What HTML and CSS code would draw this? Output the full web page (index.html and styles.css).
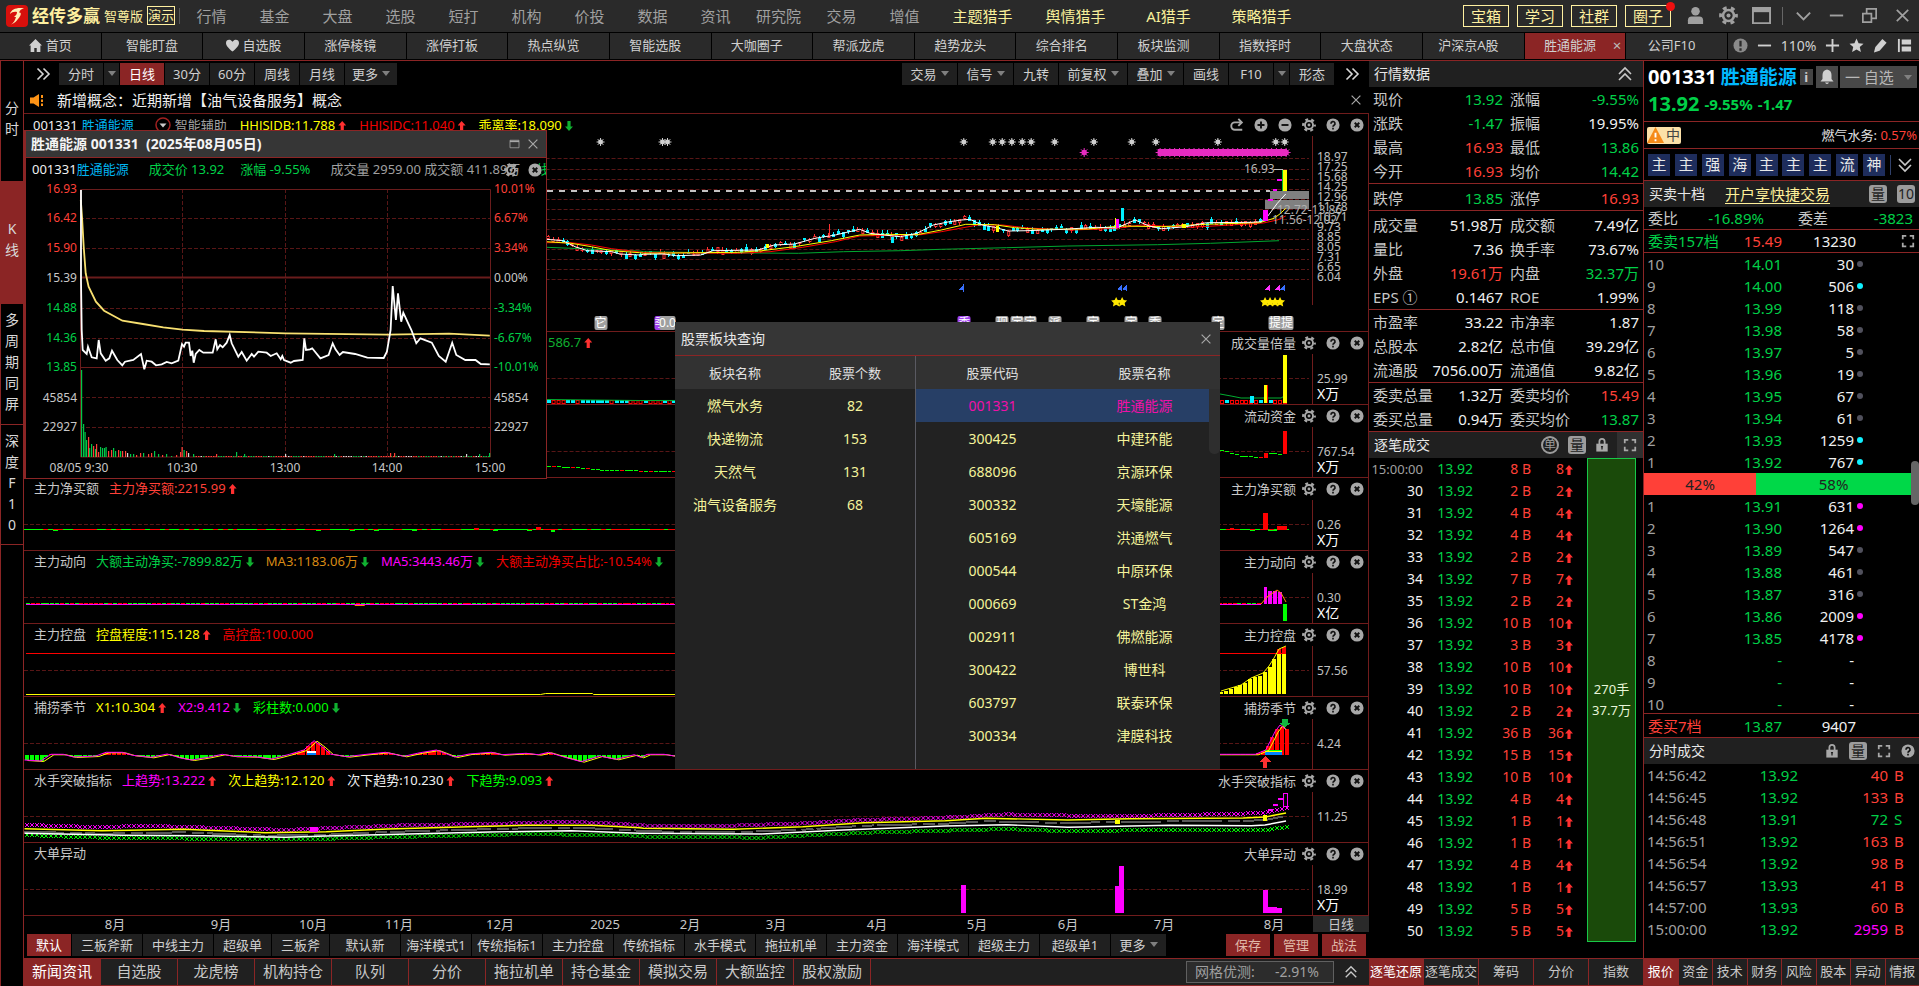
FILE: index.html
```html
<!DOCTYPE html>
<html lang="zh-CN">
<head>
<meta charset="utf-8">
<title>经传多赢 - 胜通能源 001331</title>
<link rel="stylesheet" href="styles.css">
</head>
<body>
<svg class="defs" aria-hidden="true">
  <symbol id="i-gear" viewBox="0 0 16 16"><circle cx="8" cy="8" r="4.6" fill="none" stroke="currentColor" stroke-width="2.2"/><circle cx="8" cy="8" r="1.7" fill="currentColor"/><circle cx="8" cy="8" r="6.6" fill="none" stroke="currentColor" stroke-width="2.6" stroke-dasharray="3.3 3.61" stroke-dashoffset="1.6"/></symbol>
  <symbol id="i-help" viewBox="0 0 16 16"><circle cx="8" cy="8" r="7.5" fill="currentColor"/><path d="M5.7 6.5a2.3 2.3 0 1 1 3.5 1.8c-.8.5-1.2.8-1.2 1.6M8 11v2" fill="none" stroke="#111" stroke-width="1.9"/></symbol>
  <symbol id="i-off" viewBox="0 0 16 16"><circle cx="8" cy="8" r="7.5" fill="currentColor"/><path d="M5.4 5.4l5.2 5.2M10.6 5.4l-5.2 5.2" stroke="#111" stroke-width="2.2"/></symbol>
  <symbol id="i-add" viewBox="0 0 16 16"><circle cx="8" cy="8" r="7.5" fill="currentColor"/><path d="M8 4v8M4 8h8" stroke="#111" stroke-width="2.2"/></symbol>
  <symbol id="i-sub" viewBox="0 0 16 16"><circle cx="8" cy="8" r="7.5" fill="currentColor"/><path d="M4 8h8" stroke="#111" stroke-width="2.2"/></symbol>
  <symbol id="i-redo" viewBox="0 0 16 16"><path d="M14 13.5H5.5a4 4.2 0 0 1 0-8.5H13M9.5 1L13.500 5 9.500 9" fill="none" stroke="currentColor" stroke-width="2.2"/></symbol>
  <symbol id="i-x" viewBox="0 0 16 16"><path d="M3 3l10 10M13 3L3 13" stroke="currentColor" stroke-width="1.4"/></symbol>
  <symbol id="i-right" viewBox="0 0 16 16"><path d="M2.5 2.5L8 8l-5.5 5.5M8.5 2.5L14 8l-5.500 5.500" fill="none" stroke="currentColor" stroke-width="1.6"/></symbol>
  <symbol id="i-up" viewBox="0 0 16 16"><path d="M2 8l6-6 6 6M2 14l6-6 6 6" fill="none" stroke="currentColor" stroke-width="1.6"/></symbol>
  <symbol id="i-down" viewBox="0 0 16 16"><path d="M2 2l6 6 6-6M2 8l6 6 6-6" fill="none" stroke="currentColor" stroke-width="1.6"/></symbol>
  <symbol id="i-lock" viewBox="0 0 16 16"><path d="M5 7V4a3 3 0 0 1 6 0v3" fill="none" stroke="currentColor" stroke-width="2"/><path d="M1.5 6.500h13v9h-13z" fill="currentColor"/><path d="M8 9v4M6.800 10h2.400" stroke="#111" stroke-width="1.3"/></symbol>
  <symbol id="i-full" viewBox="0 0 16 16"><path d="M2 6V2h4M10 2h4v4M14 10v4h-4M6 14H2v-4" fill="none" stroke="currentColor" stroke-width="2"/></symbol>
  <symbol id="i-win" viewBox="0 0 16 16"><path d="M2 3h12v10H2z" fill="none" stroke="currentColor"/><path d="M2 4.500h12" stroke="currentColor" stroke-width="2"/></symbol>
</svg>

<header class="topbar">
  <div class="brand">
    <svg class="logo" viewBox="0 0 22 22"><rect width="22" height="22" rx="4" fill="#d8100c"/><path d="M4 9C5 4 12 2 18 3.500c-3 .5-4 1.500-5 4C16 7 15 11 12 14c-1.500 2-3 4-7 5.500 3-2 4-4.500 5-7.500H8c2-1.500 3-3 3-5C8 6.500 6 7 4 9z" fill="#fff0b8"/></svg>
    <strong>经传多赢</strong><span>智尊版</span><em>演示</em>
  </div>
  <nav class="topnav" id="topnav"></nav>
  <div class="topbtns"><button>宝箱</button><button>学习</button><button>社群</button><button class="dot">圈子</button></div>
  <div class="wins">
    <button aria-label="用户"><svg viewBox="0 0 20 20"><circle cx="10" cy="5.500" r="4.500" fill="currentColor"/><path d="M2 19v-4q0-4 4-4h8q4 0 4 4v4z" fill="currentColor"/></svg></button>
    <button aria-label="设置"><svg><use href="#i-gear"/></svg></button>
    <button aria-label="窗口"><svg viewBox="0 0 20 20"><path d="M1 2h18v16H1z" fill="none" stroke="currentColor" stroke-width="2"/><path d="M1 4h18" stroke="currentColor" stroke-width="5"/></svg></button>
    <i class="sep"></i>
    <button aria-label="菜单"><svg viewBox="0 0 20 20"><path d="M3 7l7 7 7-7" fill="none" stroke="currentColor" stroke-width="2"/></svg></button>
    <button aria-label="最小化"><svg viewBox="0 0 20 20"><path d="M3 10h14" stroke="currentColor" stroke-width="2"/></svg></button>
    <button aria-label="还原"><svg viewBox="0 0 20 20"><path d="M3 8h9v9H3zM7 8V3h10v10h-5" fill="none" stroke="currentColor" stroke-width="1.8"/></svg></button>
    <button aria-label="关闭"><svg viewBox="0 0 20 20"><path d="M4 4l12 12M16 4L4 16" stroke="currentColor" stroke-width="1.8"/></svg></button>
  </div>
</header>

<div class="tabbar">
  <nav class="tabs" id="tabs"></nav>
  <div class="tabtools">
    <svg viewBox="0 0 16 16"><circle cx="8" cy="8" r="7.500" fill="#8a8a8a"/><path d="M8 3v6M8 11v2.500" stroke="#2a2a2a" stroke-width="2.400"/></svg>
    <svg viewBox="0 0 16 16"><path d="M1 8h14" stroke="currentColor" stroke-width="2"/></svg>
    <span>110%</span>
    <svg viewBox="0 0 16 16"><path d="M1 8h14M8 1v14" stroke="currentColor" stroke-width="2"/></svg>
    <svg viewBox="0 0 16 16"><path d="M8 .5l2.200 5 5.300.5-4 3.600 1.200 5.400L8 12.200 3.300 15l1.200-5.400L.5 6l5.300-.5z" fill="currentColor"/></svg>
    <svg viewBox="0 0 16 16"><path d="M10 1l4.500 4L7 13.500 1 15.500l1.500-6z" fill="currentColor"/></svg>
    <svg viewBox="0 0 16 16"><path d="M2 1v14" stroke="currentColor" stroke-width="2"/><path d="M5 1.500h10V7H5zM5 9h10v5.500H5z" fill="currentColor"/></svg>
  </div>
</div>

<main class="layout">
  <aside class="side">
    <button class="s-min"><span>分</span><span>时</span></button>
    <button class="s-k"><span>K</span><span>线</span></button>
    <button class="s-multi"><span>多</span><span>周</span><span>期</span><span>同</span><span>屏</span></button>
    <button class="s-f10"><span>深</span><span>度</span><span>F</span><span>1</span><span>0</span></button>
  </aside>

  <section class="charts">
    <div class="tools">
      <svg class="more"><use href="#i-right"/></svg>
      <div class="tgroup"><button class="w44">分时</button><button class="caret w14" aria-label="分时菜单"></button><button class="w44 on">日线</button><button class="w44">30分</button><button class="w44">60分</button><button class="w44">周线</button><button class="w44">月线</button><button class="caret w52">更多</button></div>
      <div class="tgroup end"><button class="caret w55">交易</button><button class="caret w55">信号</button><button class="w44">九转</button><button class="caret w68">前复权</button><button class="caret w55">叠加</button><button class="w44">画线</button><button class="w44">F10</button><button class="caret w14" aria-label="F10菜单"></button><button class="w44">形态</button></div>
      <svg class="more last"><use href="#i-right"/></svg>
    </div>
    <div class="notice">
      <svg class="horn" viewBox="0 0 15 13"><path d="M0 3.500h3.500L9 0v13L3.500 9.500H0z" fill="#ff9416"/><path d="M12 1v3M12 5.500v2.500M12 9.500v2.500" stroke="#ff9416" stroke-width="2"/></svg>
      <span>新增概念：近期新增【油气设备服务】概念</span>
      <svg class="ico nx"><use href="#i-x"/></svg>
    </div>
    <div class="pane kpane">
      <svg class="plot" id="kplot" viewBox="24 114 1289 217" preserveAspectRatio="none"></svg>
      <div class="axis" id="kaxis"></div>
      <div class="legend"><span class="white">001331</span><span class="cyan tight">胜通能源</span><svg class="drop" viewBox="0 0 16 16"><circle cx="8" cy="8" r="7" fill="none" stroke="#a02020" stroke-width="1.5"/><path d="M4.500 6.500h7L8 10.500z" fill="#ccc"/></svg><span class="gray tight">智能辅助</span><span class="yellow">HHJSJDB:11.788<i class="ar"></i></span><span class="red">HHJSJDC:11.040<i class="ar"></i></span><span class="yellow">乖离率:18.090<i class="ar dn"></i></span></div>
      <div class="pico"><svg><use href="#i-redo"/></svg><svg><use href="#i-add"/></svg><svg><use href="#i-sub"/></svg><svg><use href="#i-gear"/></svg><svg><use href="#i-help"/></svg><svg><use href="#i-off"/></svg></div>
      <span class="hi">16.93</span><span class="rng r1">12.72-13.86</span><span class="rng r2">11.56-12.02</span>
      <div id="ktags"></div>
    </div>
    <div class="panes" id="panes"></div>
    <div class="dates"><div id="dates"></div><button>日线</button></div>
    <div class="modes"><div class="mlist" id="modes"></div><div class="mact"><button>保存</button><button>管理</button><button>战法</button></div></div>
    <footer class="bottom">
      <nav class="btabs" id="btabs"></nav>
      <div class="grid-test"><span>网格优测:</span><span>-2.91%</span></div>
      <svg class="ico bup"><use href="#i-up"/></svg>
    </footer>

    <section class="mini">
      <header><h2>胜通能源 001331&nbsp; (2025年08月05日)</h2><button aria-label="最大化"><svg class="ico s"><use href="#i-win"/></svg></button><button aria-label="关闭"><svg class="ico"><use href="#i-x"/></svg></button></header>
      <div class="minfo"><span class="white">001331<b class="cyan">胜通能源</b></span><span class="green">成交价 13.92</span><span class="green">涨幅 -9.55%</span><span class="gray">成交量 2959.00 成交额 411.89万</span><span class="green">线</span></div>
      <div class="micons"><svg><use href="#i-gear"/></svg><svg><use href="#i-off"/></svg></div>
      <div class="mplot"><svg id="mplot" viewBox="26 180 520 298" preserveAspectRatio="none"></svg><div id="mlabels"></div></div>
    </section>

    <section class="dialog">
      <header><h2>股票板块查询</h2><button aria-label="关闭"><svg class="ico"><use href="#i-x"/></svg></button></header>
      <div class="dbody">
        <table class="tb-left"><thead><tr><th>板块名称</th><th>股票个数</th></tr></thead><tbody><tr><td>燃气水务</td><td>82</td></tr><tr><td>快递物流</td><td>153</td></tr><tr><td>天然气</td><td>131</td></tr><tr><td>油气设备服务</td><td>68</td></tr></tbody></table>
        <div class="dright"><table><thead><tr><th>股票代码</th><th>股票名称</th></tr></thead><tbody id="stocks"></tbody></table><i class="thumb"></i></div>
      </div>
    </section>
  </section>

  <section class="quote">
    <h2 class="bar">行情数据<svg class="ico big push"><use href="#i-up"/></svg></h2>
    <div id="quote"></div>
    <h2 class="bar">逐笔成交<span class="bicons"><b class="chip round">单</b><b class="chip">量</b><svg class="ico"><use href="#i-lock"/></svg><span class="fullbox"><svg class="ico"><use href="#i-full"/></svg></span></span></h2>
    <div class="ticks"><table id="ticks"></table><div class="gbox"><span>270手</span><span>37.7万</span></div></div>
    <footer class="bottom"><nav class="rtabs" id="rtabs1"></nav></footer>
  </section>

  <section class="level">
    <div class="stock"><strong>001331</strong><strong class="sname">胜通能源</strong><i class="info">i</i><button class="bell" aria-label="提醒"><svg viewBox="0 0 16 16"><path d="M8 .5c3 .5 4.500 2.500 4.500 5.500v4l2 2.500h-13l2-2.500V6C3.500 3 5 1 8 .5zM6 13.500h4Q8 16.500 6 13.500z" fill="#d0d0d0"/></svg></button><button class="caret fav">一 自选</button></div>
    <div class="price"><strong>13.92</strong><b>-9.55%</b><b>-1.47</b></div>
    <div class="sector"><span class="warn"><svg viewBox="0 0 18 18"><path d="M9 0l9 17H0z" fill="#f58a18"/><path d="M9 6v5M9 13v2" stroke="#fff" stroke-width="2"/></svg>中</span><span class="sec">燃气水务: <b>0.57%</b></span></div>
    <div class="tagsrow"><a href="#">主</a><a href="#">主</a><a href="#">强</a><a href="#">海</a><a href="#">主</a><a href="#">主</a><a href="#">主</a><a href="#">流</a><a href="#">神</a><i></i><svg class="ico big"><use href="#i-down"/></svg></div>
    <h2 class="bar">买卖十档<a class="open" href="#">开户享快捷交易</a><span class="bicons"><b class="chip">量</b><b class="chip">10</b></span></h2>
    <div class="ratio"><span>委比</span><span class="green num">-16.89%</span><span>委差</span><span class="green num">-3823</span></div>
    <div class="sum"><span class="green">委卖157档</span><span class="lred num">15.49</span><span class="num">13230</span><svg class="ico"><use href="#i-full"/></svg></div>
    <div class="book"><table id="asks"></table><div class="pct"><span class="p1">42%</span><span class="p2">58%</span></div><table id="bids"></table><i class="scroll"></i></div>
    <div class="sum top"><span class="lred">委买7档</span><span class="green num">13.87</span><span class="num">9407</span></div>
    <h2 class="bar">分时成交<span class="bicons"><svg class="ico"><use href="#i-lock"/></svg><b class="chip">量</b><svg class="ico"><use href="#i-full"/></svg><svg class="ico"><use href="#i-help"/></svg></span></h2>
    <table class="deals" id="deals"></table>
    <footer class="bottom"><nav class="rtabs" id="rtabs2"></nav></footer>
  </section>
</main>
<script src="app.js"></script>
</body>
</html>
```
FILE: styles.css
```css
* { box-sizing: border-box; }
html, body { height: 100%; }
body { margin: 0; background: #000; color: #c8c8c8; font: 13px/20px "Noto Sans", "Noto Sans CJK SC", sans-serif; display: flex; flex-direction: column; overflow: hidden; white-space: nowrap; }
button { font: inherit; color: inherit; background: none; border: 0; padding: 0; margin: 0; white-space: nowrap; }
a { color: inherit; text-decoration: none; }
h2 { margin: 0; font: inherit; }
i, em { font-style: normal; }
table { border-collapse: collapse; border-spacing: 0; }
td, th { padding: 0; font-weight: 400; }
svg { display: block; flex: none; }
.defs { position: absolute; width: 0; height: 0; }
.ico { width: 14px; height: 14px; color: #a8a8a8; }
.ico.big { width: 18px; height: 16px; color: #c8c8c8; }
.ico.s { width: 15px; height: 12px; }
.white { color: #f0f0f0; }
.gray { color: #a0a0a0; }
.cyan { color: #00b4f0; }
.yellow { color: #ffff00; }
.red { color: #f00000; }
.lred { color: #ff4038; }
.green { color: #00d048; }
.dgreen { color: #10b030; }
.lime { color: #00ff00; }
.mag { color: #ff00ff; }
.orange { color: #d88a14; }

.topbar { height: 32px; flex: none; background: #2a2a2a; display: flex; align-items: center; padding-bottom: 1px; }
.brand { width: 180px; flex: none; display: flex; align-items: center; color: #fff0a0; border-right: 1px solid #555; height: 16px; padding-left: 6px; }
.logo { width: 22px; height: 22px; margin-right: 4px; }
.brand strong { font-size: 17px; }
.brand span { margin-left: 4px; }
.brand em { border: 1px solid #fff0a0; margin-left: 4px; line-height: 17px; }
.topnav { display: flex; flex: 1; font-size: 15px; color: #a0a0a0; }
.topnav a { width: 63px; text-align: center; }
.topnav a.hunt { width: 93px; color: #f8f09a; }
.topbtns { display: flex; gap: 8px; font-size: 15px; color: #fff0a0; }
.topbtns button { border: 1px solid #fff0a0; width: 46px; height: 22px; line-height: 18px; position: relative; }
.dot::after { content: ""; position: absolute; right: -5px; top: -4px; width: 9px; height: 9px; border-radius: 50%; background: #f01010; }
.wins { display: flex; align-items: center; gap: 14px; padding: 0 7px 0 15px; color: #a0a0a0; }
.wins svg { width: 19px; height: 19px; }
.sep { width: 1px; height: 18px; background: #666; margin: 0 -3px; }
.tabbar { height: 29px; flex: none; padding: 1px 0; display: flex; border-bottom: 1px solid #8b2525; }
.tabs { flex: 1; display: grid; grid-auto-flow: column; grid-auto-columns: minmax(0, 1fr); gap: 1px; }
.tabs a { background: #2a2a2a; display: flex; align-items: center; justify-content: center; gap: 4px; position: relative; color: #d0d0d0; padding-bottom: 2px; }
.tabs a:nth-child(n+4) { padding-right: 10px; }
.tabs a.on { background: #8b2525; }
.tabs a.on::after { content: "×"; position: absolute; right: 4px; color: #bbb; font-size: 15px; }
.tabs svg { width: 13px; height: 13px; }
.tabtools { width: 191px; margin-left: 1px; background: #2a2a2a; display: flex; align-items: center; justify-content: space-between; padding: 0 7px 1px 5px; color: #d0d0d0; font-size: 14px; }
.tabtools svg { width: 15px; height: 15px; }

.layout { flex: 1; min-height: 0; display: grid; grid-template-columns: 24px minmax(0, 1fr) 275px 275px; }
.side { border: 1px solid #8b2525; border-width: 0 1px; display: flex; flex-direction: column; font-size: 14px; line-height: 21px; }
.side button { display: flex; flex-direction: column; align-items: center; border-bottom: 1px solid #8b2525; color: #d8d8d8; }
.side span { display: block; }
.s-min { padding: 36px 0 42px; }
.side .s-k { background: #8b2525; padding: 36px 0 43px; }
.s-multi { padding: 5px 0 10px; }
.s-f10 { padding: 5px 0 9px; }

.charts { display: flex; flex-direction: column; position: relative; min-width: 0; }
.tools { height: 26px; flex: none; display: flex; align-items: center; padding-left: 11px; }
.more { width: 16px; height: 18px; margin-right: 8px; color: #d8d8d8; }
.more.last { margin: 0 9px 0 10px; }
.tgroup { display: flex; gap: 1px; }
.tgroup.end { margin-left: auto; }
.tgroup button, .mlist button { background: #202020; height: 22px; color: #d0d0d0; }
.tgroup .on, .mlist .on, .mact button { background: #8b2525; color: #fff; }
.w44 { width: 44px; } .w14 { width: 15px; } .w52 { width: 52px; } .w55 { width: 55px; } .w68 { width: 68px; }
.caret::after { content: ""; display: inline-block; border: 4px solid transparent; border-top: 5px solid #808080; border-bottom: 0; margin-left: 4px; vertical-align: 3px; }
.caret.w14::after { margin-left: 0; }
.notice { height: 27px; flex: none; display: flex; align-items: center; border-bottom: 1px solid #701c1c; padding: 0 6px 0 6px; font-size: 15px; color: #f0f0f0; }
.horn { width: 15px; height: 13px; margin-right: 12px; }
.nx { margin-left: auto; }
.pane { position: relative; display: grid; grid-template-columns: minmax(0, 1fr) 56px; border-bottom: 1px solid #701c1c; border-right: 1px solid #701c1c; min-height: 0; overflow: hidden; flex: 73 73 0; }
.kpane { flex: 217 217 0; }
.panes { display: flex; flex-direction: column; flex: 584 584 0; min-height: 0; }
.plot { height: 100%; min-height: 0; position: absolute; inset: 0 56px 0 0; width: calc(100% - 56px); shape-rendering: crispEdges; }
.axis { grid-column: 2; border-left: 1px solid #701c1c; margin-top: 22px; padding: 17px 0 0 4px; font-size: 12px; line-height: 16px; color: #c0c0c0; display: flex; flex-direction: column; }
.axis b { font-weight: 400; font-size: 14px; line-height: 14px; color: #fff; }
#kaxis { padding-top: 13px; line-height: 16px; }
#kaxis span { height: 10px; }
.legend { position: absolute; left: 10px; top: 0; display: flex; align-items: center; gap: 12px; }
.kpane .legend { left: 9px; top: 1px; gap: 13px; }
.kpane .legend .tight { margin-left: -9px; }
.drop { width: 16px; height: 16px; margin-left: 8px; }
.legend .first { color: #c8c8c8; margin-right: -2px; }
.ar { display: inline-block; width: 8px; height: 10px; margin-left: 1px; vertical-align: -1px; background: #ff3030; clip-path: polygon(50% 0, 100% 45%, 70% 45%, 70% 100%, 30% 100%, 30% 45%, 0 45%); }
.legend .ar { margin-left: 3px; }
.ar.dn { background: #10b030; transform: rotate(180deg); }
.pico { position: absolute; right: 4px; top: 1px; display: flex; align-items: center; gap: 10px; color: #a8a8a8; }
.kpane .pico { top: 4px; }
.pico svg { width: 14px; height: 14px; }
.pname { color: #c8c8c8; margin-right: -4px; }
.hi { position: absolute; left: 1220px; top: 45px; color: #b8b8b8; }
.hi, .rng { line-height: 20px; font-size: 12px; }
.rng { position: absolute; color: #b0b0b0; }
.r1 { left: 1253px; top: 86px; }
.r2 { left: 1248px; top: 96px; }
.ktag { position: absolute; bottom: 1px; background: #a0a0a0; color: #fff; font-size: 12px; line-height: 14px; min-width: 13px; text-align: center; border-radius: 2px; transform: translateX(-50%); }
.ktag.p { background: #a040f0; }
.dates { height: 16px; flex: none; position: relative; display: flex; justify-content: flex-end; }
.dates span { position: absolute; transform: translateX(-50%); line-height: 17px; }
.dates button { width: 56px; background: #2a2a2a; line-height: 16px; }
.modes { height: 26px; flex: none; display: flex; align-items: center; justify-content: space-between; padding: 0 3px; }
.mlist, .mact { display: flex; gap: 1px; }
.mlist button { width: 70px; }
.mlist .n3 { width: 57px; }
.mlist .on { width: 44px; }
.mlist .caret { width: 55px; }
.mact { gap: 4px; }
.mact button { width: 44px; height: 22px; color: #e0b8a8; }
.bottom { height: 28px; flex: none; border: 1px solid #8b2525; border-width: 1px 0; background: #202020; display: flex; align-items: center; margin-top: auto; }
.btabs { display: flex; height: 100%; font-size: 15px; }
.btabs a { width: 77px; border-right: 1px solid #8b2525; text-align: center; line-height: 25px; }
.btabs .on, .rtabs .on { background: #8b2525; color: #fff; }
.grid-test { margin-left: auto; border: 1px solid #606060; background: #2c2c2c; height: 22px; width: 148px; display: flex; justify-content: space-between; padding: 0 14px 0 8px; font-size: 14px; color: #a0a0a0; }
.bup { margin: 0 11px 0 10px; color: #c8c8c8; }

.mini { position: absolute; left: 0; top: 69px; width: 523px; height: 349px; background: #000; border: 1px solid #8b2525; border-left-width: 2px; display: flex; flex-direction: column; }
.mini header, .dialog header { background: #363636; display: flex; align-items: center; border-bottom: 1px solid #8b2525; }
.mini header { height: 27px; padding: 0 6px 0 5px; gap: 4px; }
.mini h2 { font-size: 14px; font-weight: 700; color: #f4f4f4; margin-right: auto; }
.minfo { display: flex; gap: 16px; padding: 1px 0 0 6px; height: 22px; overflow: hidden; }
.minfo b { font-weight: 400; }
.minfo span:nth-child(2) { margin-left: 4px; }
.minfo .gray { margin-left: 4px; }
.micons { position: absolute; right: 4px; top: 32px; display: flex; gap: 10px; color: #a8a8a8; }
.micons svg { width: 14px; height: 14px; }
.mplot { flex: 1; position: relative; min-height: 0; }
.mplot svg { width: 100%; height: 100%; position: absolute; inset: 0; }
.mplot span { position: absolute; font-size: 12px; line-height: 16px; }
.mplot .c { transform: translate(-50%, -50%); }
.mplot .l { transform: translate(-100%, -50%); }
.mplot .r { transform: translateY(-50%); }

.dialog { position: absolute; left: 651px; top: 261px; width: 545px; height: 447px; background: #222; display: flex; flex-direction: column; }
.dialog header { height: 34px; padding: 0 7px 0 6px; font-size: 14px; color: #e8e8e8; justify-content: space-between; }
.dbody { flex: 1; display: grid; grid-template-columns: 240px 1fr; align-items: start; background: linear-gradient(#323232, #323232) 0 0 / 100% 33px no-repeat; }
.dbody table { width: 100%; table-layout: fixed; text-align: center; }
.dright { position: relative; border-left: 1px solid #5a5a62; height: 100%; padding-right: 11px; }
.dbody th { height: 33px; color: #e0e0e0; }
.dbody td { height: 33px; font-size: 14px; color: #f4f39b; }
.dright th:nth-child(1) { width: 164px; }
.dright th:nth-child(1), .dright td:nth-child(1) { padding-right: 11px; }
.tb-left th:nth-child(1) { width: 120px; }
.dbody .sel { background: #273f66; }
.dbody .sel td { color: #f010a8; }
.thumb { position: absolute; right: 0; top: 33px; width: 11px; height: 65px; background: #2e2e2e; border-radius: 0 0 5px 5px; }

.quote, .level { display: flex; flex-direction: column; border-right: 1px solid #8b2525; min-width: 0; }
.level { border-right: 0; }
.bar { height: 26px; flex: none; background: #202020; display: flex; align-items: center; padding-left: 5px; font-size: 14px; color: #e8e8e8; }
.push { margin: 0 9px 0 auto; }
.bicons { margin-left: auto; display: flex; align-items: center; gap: 10px; padding-right: 4px; height: 100%; }
.quote .bicons { padding: 0; gap: 9px; }
.fullbox { background: #303030; width: 26px; height: 100%; display: grid; place-items: center; margin-left: -1px; }
.chip { width: 18px; height: 18px; border-radius: 3px; background: #9c9c9c; color: #222; font: 14px/17px "Noto Sans", "Noto Sans CJK SC", sans-serif; text-align: center; }
.chip.round { border-radius: 50%; background: none; border: 2px solid #9c9c9c; color: #9c9c9c; font-size: 12px; line-height: 13px; }
.qg { border-bottom: 1px solid #8b2525; }
.qg:nth-child(2), .qg:nth-child(3) { padding-top: 2px; }
.qt { width: 100%; table-layout: fixed; font-size: 15px; line-height: 24px; }
.qt td { height: 24px; }
.qt td:nth-child(1) { width: 60px; padding-left: 4px; }
.qt td:nth-child(2) { text-align: right; color: #f0f0f0; }
.qt td:nth-child(3) { width: 68px; padding-left: 7px; }
.qt td:nth-child(4) { width: 72px; text-align: right; padding-right: 4px; color: #f0f0f0; }
.qt td:nth-child(2) { direction: rtl; unicode-bidi: plaintext; }
.qt td.u:nth-child(n) { color: #ff4038; }
.qt td.d:nth-child(n) { color: #00d048; }
.ticks { display: grid; grid-template-columns: 1fr 49px; padding-right: 7px; column-gap: 10px; font-size: 14px; color: #ff4038; }
.ticks table { width: 100%; table-layout: fixed; text-align: right; }
.ticks td { height: 22px; line-height: 22px; }
.ticks td:nth-child(1) { width: 54px; color: #f0f0f0; }
.ticks tr:first-child td:nth-child(1) { color: #a0a0a0; font-size: 13px; }
.ticks td:nth-child(2) { width: 50px; color: #00d048; }
.ticks td:nth-child(4) { width: 46px; }
.ticks .ar { margin-right: 4px; }
.gbox { border: 1px solid #18c848; background: #1a4a0a; color: #e8f5d8; font-size: 13px; line-height: 21px; display: flex; flex-direction: column; align-items: center; justify-content: center; }
.rtabs { display: flex; flex: 1; height: 100%; }
.rtabs a { flex: 1 1 0; text-align: center; line-height: 25px; border-right: 1px solid #8b2525; }
.rtabs a:last-child { border: 0; }

.stock { display: flex; align-items: center; height: 32px; padding: 0 2px 0 4px; color: #fff; }
.stock strong { font-size: 20px; }
.stock .sname { font-size: 19px; color: #00b8ff; margin-left: 4px; }
.info { background: #444; width: 13px; text-align: center; margin: 0 3px; line-height: 16px; color: #ccc; font-weight: 700; }
.bell { background: #484848; width: 22px; height: 22px; display: grid; place-items: center; margin-right: 2px; }
.bell svg { width: 16px; height: 16px; }
.fav { background: #484848; height: 22px; flex: 1; color: #b8b8b8; font-size: 15px; line-height: 20px; }
.fav::after { margin-left: 10px; }
.price { display: flex; align-items: center; gap: 5px; color: #00d048; height: 29px; padding: 0 0 6px 4px; border-bottom: 1px solid #8b2525; }
.price strong { font-size: 20px; }
.price b { font-size: 15px; }
.sector { display: flex; align-items: center; justify-content: space-between; height: 27px; border-bottom: 1px solid #8b2525; padding: 0 2px 0 3px; }
.warn { background: #fce0a8; color: #444; display: flex; align-items: center; height: 17px; width: 34px; border-radius: 2px; font-size: 14px; }
.warn svg { width: 17px; height: 17px; margin-right: 2px; }
.sec { color: #e0e0e0; }
.sec b { color: #ff4038; font-weight: 400; }
.tagsrow { display: flex; align-items: center; justify-content: space-between; height: 32px; border-bottom: 1px solid #8b2525; padding: 0 5px 0 4px; font-size: 15px; }
.tagsrow a { width: 22px; height: 22px; background: #1e2d5c; color: #e8e8e8; text-align: center; line-height: 21px; }
.tagsrow i { width: 1px; height: 20px; background: #30406a; }
.open { color: #fff09a; font-size: 15px; text-decoration: underline; text-underline-offset: 3px; margin-left: 20px; }
.ratio { display: grid; grid-template-columns: 60px 56px 1fr 60px; font-size: 15px; line-height: 22px; padding: 0 6px 0 4px; height: 23px; border-bottom: 1px solid #8b2525; }
.ratio span:nth-child(3) { padding-left: 34px; }
.num { text-align: right; }
.sum { display: grid; grid-template-columns: 78px 56px 74px 1fr; font-size: 15px; line-height: 22px; height: 23px; padding: 0 4px; border-bottom: 1px solid #8b2525; color: #f0f0f0; align-items: center; }
.sum .ico { justify-self: end; }
.sum.top { border-top: 1px solid #8b2525; height: 25px; margin-top: -2px; }
.book { position: relative; font-size: 15px; }
.book table, .deals { width: 100%; table-layout: fixed; font-size: 15px; }
.book td { height: 22px; line-height: 21px; text-align: right; color: #f0f0f0; }
.book td:nth-child(1) { width: 40px; text-align: left; padding-left: 3px; color: #a0a0a0; }
.book td:nth-child(2) { color: #00d048; width: 98px; }
.book td:nth-child(3) { width: 72px; }
.book td:nth-child(4) { text-align: left; padding-left: 3px; }
.book td i { display: block; width: 6px; height: 6px; border-radius: 50%; background: #50505c; }
.book td .c { background: #10f0ff; } .book td .m { background: #ff00ff; }
.pct { display: flex; height: 22px; line-height: 22px; text-align: center; color: #222; padding-right: 8px; }
.p1 { flex: 42; background: #ff4038; } .p2 { flex: 58; background: #00d848; }
.scroll { position: absolute; right: 0; top: 208px; width: 8px; height: 44px; border-radius: 4px; background: #666; }
.deals td { height: 22px; line-height: 22px; text-align: right; }
.deals td:nth-child(1) { width: 90px; text-align: left; padding-left: 3px; color: #a0a0a0; }
.deals td:nth-child(2) { width: 64px; color: #00d048; }
.deals td:nth-child(3) { width: 90px; }
.deals td:nth-child(4) { text-align: left; padding-left: 6px; }
```
FILE: app.js
```js
const $ = id => document.getElementById(id);
const fill = (id, list, fn) => { $(id).innerHTML = list.map(fn).join(''); };

/* navigation */
fill('topnav', '行情 基金 大盘 选股 短打 机构 价投 数据 资讯 研究院 交易 增值 主题猎手 舆情猎手 AI猎手 策略猎手'.split(' '),
  (t, i) => `<a href="#"${i > 11 ? ' class="hunt"' : ''}>${t}</a>`);
const home = '<svg viewBox="0 0 16 16"><path d="M8 0l8 8h-2v8H9.500v-5h-3v5H2V8H0z" fill="currentColor"/></svg>';
const heart = '<svg viewBox="0 0 16 16"><path d="M8 15.500C3 11 0 8 0 4.800 0 .5 5.500-.5 8 3.500 10.500-.5 16 .5 16 4.800 16 8 13 11 8 15.500z" fill="currentColor"/></svg>';
fill('tabs', '首页 智能盯盘 自选股 涨停棱镜 涨停打板 热点纵览 智能选股 大咖圈子 帮派龙虎 趋势龙头 综合排名 板块监测 指数择时 大盘状态 沪深京A股 胜通能源 公司F10'.split(' '),
  (t, i) => `<a href="#"${i === 15 ? ' class="on"' : ''}>${i === 0 ? home : i === 2 ? heart : ''}${t}</a>`);
fill('modes', '默认 三板斧新 中线主力 超级单 三板斧 默认新 海洋模式1 传统指标1 主力控盘 传统指标 水手模式 拖拉机单 主力资金 海洋模式 超级主力 超级单1 更多'.split(' '),
  (t, i) => `<button class="${i === 0 ? 'on' : i === 3 || i === 4 ? 'n3' : i === 16 ? 'caret' : ''}">${t}</button>`);
const tab = (t, i) => `<a href="#"${i === 0 ? ' class="on"' : ''}>${t}</a>`;
fill('btabs', '新闻资讯 自选股 龙虎榜 机构持仓 队列 分价 拖拉机单 持仓基金 模拟交易 大额监控 股权激励'.split(' '), tab);
fill('rtabs1', '逐笔还原 逐笔成交 筹码 分价 指数'.split(' '), tab);
fill('rtabs2', '报价 资金 技术 财务 风险 股本 异动 情报'.split(' '), tab);

/* tables */
fill('stocks', ['001331 胜通能源', '300425 中建环能', '688096 京源环保', '300332 天壕能源', '605169 洪通燃气', '000544 中原环保', '000669 ST金鸿', '002911 佛燃能源', '300422 博世科', '603797 联泰环保', '300334 津膜科技'],
  (r, i) => { const [a, b] = r.split(' '); return `<tr${i ? '' : ' class="sel"'}><td>${a}</td><td>${b}</td></tr>`; });
const groups = [
  [['现价', '13.92', 'd', '涨幅', '-9.55%', 'd'], ['涨跌', '-1.47', 'd', '振幅', '19.95%', ''], ['最高', '16.93', 'u', '最低', '13.86', 'd'], ['今开', '16.93', 'u', '均价', '14.42', 'd']],
  [['跌停', '13.85', 'd', '涨停', '16.93', 'u']],
  [['成交量', '51.98万', '', '成交额', '7.49亿', ''], ['量比', '7.36', '', '换手率', '73.67%', ''], ['外盘', '19.61万', 'u', '内盘', '32.37万', 'd'], ['EPS ①', '0.1467', '', 'ROE', '1.99%', '']],
  [['市盈率', '33.22', '', '市净率', '1.87', ''], ['总股本', '2.82亿', '', '总市值', '39.29亿', ''], ['流通股', '7056.00万', '', '流通值', '9.82亿', '']],
  [['委卖总量', '1.32万', '', '委卖均价', '15.49', 'u'], ['委买总量', '0.94万', '', '委买均价', '13.87', 'd']]];
fill('quote', groups, g => `<div class="qg"><table class="qt">${g.map(r => `<tr><td>${r[0]}</td><td class="${r[2]}">${r[1]}</td><td>${r[3]}</td><td class="${r[5]}">${r[4]}</td></tr>`).join('')}</table></div>`);
fill('ticks', [8, 2, 4, 4, 2, 7, 2, 10, 3, 10, 10, 2, 36, 15, 10, 4, 1, 1, 4, 1, 5, 5],
  (v, i) => `<tr><td>${i ? 29 + i : '15:00:00'}</td><td>13.92</td><td>${v} B</td><td>${v}<i class="ar"></i></td></tr>`);
const bookRow = r => `<tr><td>${r[0]}</td><td>${r[1]}</td><td>${r[2]}</td><td>${r[2] === '-' ? '' : `<i class="${r[3] || ''}"></i>`}</td></tr>`;
fill('asks', [[10, '14.01', 30], [9, '14.00', 506, 'c'], [8, '13.99', 118], [7, '13.98', 58], [6, '13.97', 5], [5, '13.96', 19], [4, '13.95', 67], [3, '13.94', 61], [2, '13.93', 1259, 'c'], [1, '13.92', 767, 'c']], bookRow);
fill('bids', [[1, '13.91', 631, 'm'], [2, '13.90', 1264, 'm'], [3, '13.89', 547], [4, '13.88', 461], [5, '13.87', 316], [6, '13.86', 2009, 'm'], [7, '13.85', 4178, 'm'], [8, '-', '-'], [9, '-', '-'], [10, '-', '-']], bookRow);
fill('deals', [['14:56:42', '13.92', 40], ['14:56:45', '13.92', 133], ['14:56:48', '13.91', 72, 'S'], ['14:56:51', '13.92', 163], ['14:56:54', '13.92', 98], ['14:56:57', '13.93', 41], ['14:57:00', '13.93', 60], ['15:00:00', '13.92', 2959]],
  r => { const c = r[3] ? 'green' : 'lred'; return `<tr><td>${r[0]}</td><td>${r[1]}</td><td class="${r[2] > 2000 ? 'mag' : c}">${r[2]}</td><td class="${c}">${r[3] || 'B'}</td></tr>`; });

/* drawing helpers: chart space is 24..1313 across */
const K = 2.45;
const L = (x0, y0, pts, kx = K) => pts.map(([x, y]) => [x0 + x / kx, y0 + y / 3]);
const path = (pts, c, w = 1, extra = '') => `<path d="M${pts.map(p => p[0].toFixed(1) + ' ' + p[1].toFixed(1)).join('L')}" fill="none" stroke="${c}" stroke-width="${w}" ${extra}/>`;
const rect = (x, y, w, h, c, extra = '') => `<rect x="${x}" y="${y}" width="${w}" height="${h}" fill="${c}" ${extra}/>`;
const hline = (y, c, x1 = 24, x2 = 1310, w = 1, dash = '') => `<path d="M${x1} ${y + .5}H${x2}" stroke="${c}" stroke-width="${w}" ${dash ? `stroke-dasharray="${dash}"` : ''}/>`;
const grid = y => hline(y, '#581616', 24, 1310, 1, '4 2');
const at = (pts, x) => { for (let i = 1; i < pts.length; i++) if (x <= pts[i][0]) { const [a, b] = [pts[i - 1], pts[i]]; return a[1] + (b[1] - a[1]) * (x - a[0]) / ((b[0] - a[0]) || 1); } return pts[pts.length - 1][1]; };
let seed = 7; const rnd = () => (seed = (seed * 16807) % 2147483647) / 2147483647;
const STEP = 4.85;

/* main candlestick chart */
const ma1 = [...L(0, 0, [[1340, 718], [1380, 722], [1410, 740], [1440, 752], [1500, 755], [1520, 762], [1568, 765]]),
  ...L(640, 0, [[10, 763], [60, 762], [90, 767], [150, 765], [180, 752], [290, 750], [330, 735], [380, 732], [430, 715], [480, 705], [540, 688], [565, 700], [600, 705], [640, 710], [680, 700], [720, 675], [760, 665], [790, 660], [810, 658], [840, 675], [870, 682], [905, 693], [950, 692], [1040, 688], [1120, 682], [1170, 684], [1215, 660], [1250, 678], [1280, 686], [1340, 680], [1390, 668], [1500, 667], [1525, 665]]),
  ...L(1200, 120, [[205, 290], [235, 250], [260, 222]], 3)];
const ma2 = [...L(0, 0, [[1340, 725], [1400, 730], [1450, 740], [1500, 752], [1568, 758]]),
  ...L(640, 0, [[10, 760], [240, 757], [300, 752], [380, 740], [470, 722], [540, 705], [600, 703], [680, 704], [740, 690], [800, 673], [870, 674], [920, 683], [980, 688], [1100, 687], [1180, 678], [1280, 680], [1390, 673], [1520, 668]]),
  ...L(1200, 120, [[225, 295], [245, 280], [260, 265]], 3)];
const ma3 = [...L(0, 0, [[1340, 728], [1400, 728], [1450, 735], [1500, 746], [1568, 756]]),
  ...L(640, 0, [[10, 758], [240, 760], [320, 755], [400, 742], [480, 725], [540, 708], [690, 704], [740, 695], [830, 675], [890, 675], [950, 684], [1060, 690], [1170, 685], [1230, 675], [1350, 682], [1450, 675], [1530, 669]]),
  ...L(1200, 120, [[235, 300], [260, 288]], 3)];
const ma4 = [...L(0, 0, [[1340, 742], [1568, 753]]), ...L(640, 0, [[10, 755], [160, 758], [390, 760], [500, 755], [640, 752], [740, 748], [900, 743], [1050, 738], [1270, 734], [1400, 730], [1568, 722]])];
let k = '';
[158, 169, 179, 189, 199, 209, 219, 229, 239, 249, 259, 269, 279].forEach(y => { k += grid(y); });
k += hline(190.5, '#c4c4c4', 547, 1271, 2, '6 6');
k += rect(1271, 191, 39, 8, '#808080') + rect(1266, 200, 44, 9, '#808080');
for (let x = 547; x < 1262; x += STEP) {
  const y = at(ma1, x) + (rnd() - .7) * 4, isUp = rnd() > .5, h = 1 + rnd() * 3, c = isUp ? '#ff3030' : '#00f0ff';
  const px = Math.round(x);
  k += rect(px + 1, Math.round(y - 1 - rnd() * 3), 1, Math.round(h + 3), c);
  k += isUp ? rect(px + .5, Math.round(y) - .5, 2, Math.round(h), '#000', 'stroke="#ff3030"') : rect(px, Math.round(y - 1), 3, Math.round(h + 1), c);
}
k += path(ma4, '#00a830') + path(ma3, '#ff0000') + path(ma2, '#ffff00') + path(ma1, '#fff');
k += rect(1122, 208, 3, 13, '#00f0ff') + rect(1116, 218, 1, 10, '#ffff00') + rect(1117, 219, 3, 9, '#ff00ff') + rect(997, 226, 3, 6, '#ffff00') + rect(1183, 224, 4, 4, '#ffff00') + rect(767, 244, 3, 4, '#ffff00') + rect(830, 224, 1, 12, '#ff3030') + rect(892, 237, 3, 6, '#00f0ff');
k += rect(1264, 210, 5, 11, '#ff00ff') + rect(1269, 199, 5, 2, '#ff00ff') + rect(1274, 189, 4, 2, '#ff00ff') + rect(1278, 179, 5, 2, '#ff00ff') + rect(1283, 170, 1, 21, '#00c030') + rect(1284, 170, 4, 21, '#ffff00') + hline(169, '#c0c0c0', 1275, 1284);
const burst = (x, y, c, r) => `<g shape-rendering="auto"><path d="M${x - r} ${y}h${2 * r}M${x} ${y - r}v${2 * r}M${x - r * .7} ${y - r * .7}l${r * 1.4} ${r * 1.4}M${x + r * .7} ${y - r * .7}l${-r * 1.4} ${r * 1.4}" stroke="${c}"/><circle cx="${x}" cy="${y}" r="${r * .6}" fill="${c}"/></g>`;
[601, 663, 668, 964.5, 993.5, 1003, 1012.6, 1023, 1032, 1055.5, 1094.7, 1132.6, 1156.7, 1218.8, 1276.7, 1285.7].forEach(x => { k += burst(x, 142, '#d0d0d0', 4); });
k += burst(1085, 152.5, '#e82bc0', 4.5) + rect(1159, 149, 129, 7, '#e82bc0');
for (let x = 1161; x < 1290; x += STEP) k += burst(x, 152.5, '#e82bc0', 4.5);
[[962.5, 0], [1121, 0], [1126, 0], [1269, 1], [1279, 1], [1284, 0]].forEach(([x, m]) => { k += `<path d="M${x + 2} 284v9l-1-3h-4z" fill="${m ? '#ff30ff' : '#3870ff'}"/>`; });
const star = (x, y) => `<path shape-rendering="auto" d="M${x} ${y - 5}l1.5 3 3.5.5-2.5 2.5.7 3.5-3.2-1.7-3.2 1.7.7-3.5-2.5-2.5 3.5-.5z" fill="#ffe800"/>`;
[1117, 1123, 1266, 1271, 1276, 1281].forEach(x => { k += star(x, 302); });
$('kplot').innerHTML = k;
fill('kaxis', '18.97 17.25 15.68 14.25 12.96 11.78 10.71 9.73 8.85 8.05 7.31 6.65 6.04'.split(' '), t => `<span>${t}</span>`);
fill('ktags', [[601, '它'], [661, '季', 1], [668, '0.0'], [965, '季', 1], [1003, '现'], [1018, '定'], [1031, '定'], [1056, '派'], [1094, '定'], [1132, '定'], [1156, '季'], [1219, '定'], [1276, '提'], [1288, '提']],
  ([x, t, p]) => `<span class="ktag${p ? ' p' : ''}" style="left:${((x - 24) / 13.45).toFixed(2)}%">${t}</span>`);

/* indicator panels */
const up = '<i class="ar"></i>', dn = '<i class="ar dn"></i>';
const panes = [
  ['成交量倍量', '', '25.99', 'X万'],
  ['流动资金', '', '767.54', 'X万'],
  ['主力净买额', `<span class="lred">主力净买额:2215.99${up}</span>`, '0.26', 'X万'],
  ['主力动向', `<span class="green">大额主动净买:-7899.82万${dn}</span><span class="orange">MA3:1183.06万${dn}</span><span class="mag">MA5:3443.46万${dn}</span><span class="red">大额主动净买占比:-10.54%${dn}</span>`, '0.30', 'X亿'],
  ['主力控盘', `<span class="yellow">控盘程度:115.128${up}</span><span class="red">高控盘:100.000</span>`, '57.56', ''],
  ['捕捞季节', `<span class="yellow">X1:10.304${up}</span><span class="mag">X2:9.412${dn}</span><span class="lime">彩柱数:0.000${dn}</span>`, '4.24', ''],
  ['水手突破指标', `<span class="mag">上趋势:13.222${up}</span><span class="yellow">次上趋势:12.120${up}</span><span class="white">次下趋势:10.230${up}</span><span class="lime">下趋势:9.093${up}</span>`, '11.25', ''],
  ['大单异动', '', '18.99', 'X万']];
const draw = [];
/* volume multiple */
let s = '';
for (let x = 547; x < 1286; x += STEP) { const px = Math.round(x); s += rnd() > .55 ? rect(px + .5, 400.5, 3, 3, '#000', 'stroke="#ff0000"') : rect(px, 400, 4, 3, '#00f0ff'); }
s += path([[547, 399.5], [640, 400.5], [1200, 400], [1221, 394], [1232, 396], [1242, 398], [1282, 398], [1287, 395]], '#00b030') + rect(1251, 396, 4, 7, '#00f0ff') + rect(1265, 385, 3, 18, '#ffff00') + rect(1268, 385, 1, 18, '#ff0000') + rect(1284, 355, 4, 48, '#ffff00');
draw.push(s);
/* floating funds */
s = '';
const ff = [[547, 466], [575, 467], [600, 470], [675, 471], [1221, 450], [1232, 453], [1242, 456], [1262, 457], [1270, 453], [1285, 454]];
for (let x = 547; x < 1284; x += STEP) s += rect(Math.round(x), Math.round(at(ff, x)), 4, 1, rnd() > .25 ? '#00ff00' : '#ff0000');
s += rect(1265, 453, 4, 5, '#ff0000') + rect(1284, 431, 4, 23, '#ff0000');
draw.push(s);
/* main force net buying */
s = '';
for (let x = 24; x < 1288; x += STEP) s += rect(Math.round(x), 529, 5, 1, rnd() > .45 ? '#00ff00' : '#ff0000');
[53, 316, 350, 374, 412, 493, 527, 1251].forEach(x => { s += rect(x, 530, 5, 1, '#00ff00'); });
s += rect(474, 528, 5, 2, '#ff0000') + rect(536, 527, 5, 3, '#ff0000') + rect(551, 530, 4, 2, '#00ff00') + rect(1231, 528, 4, 2, '#ff0000') + rect(1264, 513, 5, 17, '#ff0000') + rect(1269, 530, 9, 1, '#00ff00') + rect(1278, 526, 10, 4, '#ff0000');
draw.push(s);
/* main force trend */
s = '';
for (let x = 26; x < 1262; x += STEP) s += rect(Math.round(x), 603, 4, 1, rnd() > .45 ? '#00ff00' : '#ff0000');
s += hline(604, '#ff00ff', 26, 1262) + hline(605, '#ff8000', 355, 365) + rect(1265, 587, 3, 17, '#ff00ff') + rect(1269, 591, 4, 13, '#ff00ff') + rect(1274, 591, 4, 13, '#ff00ff') + rect(1279, 592, 4, 12, '#ff00ff') + rect(1284, 604, 4, 17, '#00ff00') + path([[1262, 604], [1268, 597], [1278, 590], [1282, 593], [1287, 602]], '#ff9000');
draw.push(s);
/* control degree */
s = hline(653, '#ff0000', 26, 1287) + path([[26, 694.5], [541, 694.5], [546, 693.5], [593, 693.5], [594, 694.5], [1220, 694.5]], '#ffff00');
[2, 3, 5, 7, 9, 11, 15, 17, 18, 22, 27, 35, 45, 47].forEach((h, i) => {
  const x = Math.round(1220 + i * STEP);
  s += rect(x, 694 - Math.min(h, 40), 4, Math.min(h, 40), '#ffff00');
  if (h > 40) s += rect(x, 694 - h, 4, h - 40, '#ff0000');
});
s += path([[1222, 691], [1242, 685], [1252, 678], [1264, 673], [1270, 666], [1275, 658], [1280, 649], [1287, 646]], '#ffff00');
draw.push(s);
/* fishing season */
const fs = [...L(0, 660, [[60, 300], [100, 303], [125, 283], [155, 283], [180, 291], [235, 288], [260, 277], [300, 277], [325, 286], [370, 292], [410, 282], [440, 293], [470, 300], [510, 292], [545, 283], [575, 289], [625, 290], [665, 297], [710, 283], [745, 270], [770, 242], [790, 260], [810, 282], [850, 290], [890, 284], [945, 277], [990, 289], [1030, 278], [1070, 270], [1115, 291], [1150, 282], [1205, 277], [1230, 284], [1290, 280], [1320, 284], [1345, 277], [1380, 290], [1425, 305], [1470, 288], [1510, 298], [1555, 284], [1567, 290]]),
  ...L(640, 660, [[3, 292], [20, 283], [60, 283], [86, 288], [1421, 283], [1510, 283]]), ...L(1210, 520, [[170, 690], [183, 665], [198, 635], [213, 615], [230, 628]], 3)];
s = '';
for (let x = 25; x < 1286; x += STEP) { const y = Math.round(at(fs, x + 2)), h = y - 755, px = Math.round(x); if (h) s += h > 0 ? rect(px, 755, 4, h, '#00ff00') : rect(px, y, 4, -h, '#ff0000'); }
s += rect(307, 751, 9, 2, '#fff') + rect(307, 753, 9, 2, '#0080ff') + rect(1266, 750, 17, 1, '#00ff00') + rect(1266, 751, 17, 1, '#ffff00') + rect(1266, 752, 17, 3, '#0080ff');
s += path(fs.map(([x, y]) => [Math.min(x + 3, 1287), y + .5]), '#ffff00') + path(fs, '#ff00ff');
s += '<path d="M1266 756l6 6h-4v6h-4v-6h-4z" fill="#ff3030"/><path d="M1286 727l6-4h-3v-4h-6v4h-3z" fill="#10b840"/>';
draw.push(s);
/* sailor breakout */
const band = (a, b, end) => [...L(0, 660, a), ...L(640, 660, b), [1266, end[0]], [1287, end[1]]];
const bm = band([[60, 495], [200, 500], [400, 499], [520, 503], [700, 510], [800, 505], [900, 500], [1000, 495], [1200, 492], [1400, 485], [1568, 495]], [[10, 497], [200, 498], [400, 490], [550, 480], [700, 475], [800, 470], [900, 463], [1000, 466], [1200, 468], [1400, 463]], [813, 808]);
const by = band([[60, 506], [250, 512], [450, 508], [650, 518], [800, 515], [950, 507], [1150, 500], [1290, 496], [1450, 496], [1568, 503]], [[10, 505], [230, 508], [400, 500], [550, 488], [750, 482], [850, 475], [1050, 480], [1200, 476], [1480, 474]], [817, 813]);
const bw = band([[60, 520], [300, 526], [500, 527], [700, 532], [800, 528], [1000, 522], [1200, 516], [1400, 512], [1568, 520]], [[10, 520], [300, 522], [500, 510], [750, 498], [900, 494], [1050, 502], [1300, 496], [1500, 497]], [825, 821]);
const bg = band([[60, 525], [200, 532], [400, 535], [740, 538], [1000, 530], [1300, 522], [1568, 527]], [[10, 530], [300, 533], [550, 518], [750, 512], [900, 507], [1050, 514], [1300, 509], [1500, 510]], [830, 827]);
const cross = (pts, c) => { let o = ''; for (let x = 25; x < 1287; x += STEP) { const y = Math.round(at(pts, x + 2)); o += `M${Math.round(x)} ${y - 2}l4 4m0-4l-4 4`; } return `<path d="${o}" stroke="${c}" fill="none"/>`; };
s = path(by.map(([x, y]) => [x, y + 3]), '#585858', 2, 'stroke-dasharray="40 6 12 3"') + cross(bm, '#ff00ff') + cross(bg, '#00ff00') + path(by, '#ffff00', 1.4, 'shape-rendering="auto"') + path(bw, '#fff', 1.4, 'shape-rendering="auto"');
s += rect(310, 827, 8, 5, '#ff00ff') + rect(1116, 820, 5, 4, '#ffff00') + rect(1264, 815, 4, 6, '#ffff00') + rect(1269, 809, 5, 2, '#ff00ff') + rect(1274, 804, 5, 2, '#ff00ff') + rect(1279, 798, 5, 2, '#ff00ff') + rect(1284.5, 793.5, 4, 13, '#000', 'stroke="#ff00ff"');
draw.push(s);
/* block orders */
draw.push([[962, 885, 5, 28], [1116, 886, 4, 27], [1120, 866, 5, 47], [1264, 890, 5, 23], [1269, 907, 9, 6], [1278, 908, 5, 5]].map(r => rect(...r, '#ff00ff')).join(''));

$('panes').innerHTML = panes.map(([n, vals, v, unit], i) => {
  const top = 332 + 73 * i, first = i < 2 ? '' : `<span class="first">${n}</span>`;
  const edge = i === 0 ? '<span class="dgreen" style="margin-left:514px">586.7' + up + '</span>' : '';
  return `<div class="pane"><svg class="plot" viewBox="24 ${top} 1289 72" preserveAspectRatio="none">${grid(top + 46)}${draw[i]}</svg><div class="axis"><span>${v}</span>${unit ? `<b>${unit}</b>` : ''}</div><div class="legend">${first}${vals}${edge}</div><div class="pico"><span class="pname">${n}</span><svg><use href="#i-gear"/></svg><svg><use href="#i-help"/></svg><svg><use href="#i-off"/></svg></div></div>`;
}).join('');
fill('dates', [[115, '8月'], [221, '9月'], [313, '10月'], [399, '11月'], [500, '12月'], [605, '2025'], [690, '2月'], [776, '3月'], [877, '4月'], [977, '5月'], [1068, '6月'], [1164, '7月'], [1274, '8月']],
  ([x, t]) => `<span style="left:${((x - 24) / 13.45).toFixed(2)}%">${t}</span>`);

/* intraday window */
const G = '#6a1c1c';
let m = '';
[218, 248, 308, 338, 397, 427].forEach(y => { m += hline(y, '#581616', 80, 490, 1, '4 2'); });
[182.5, 285.5, 387.5].forEach(x => { m += `<path d="M${x} 189V457" stroke="#581616" stroke-dasharray="4 2"/>`; });
m += `<path d="M80.5 189.5H490.5V457H80.5z" fill="none" stroke="${G}"/>` + hline(277, G, 80, 490, 2) + hline(367, G, 80, 490);
const volume = [[0, 87, 1], [2, 33, 1], [3.5, 25, 1], [5, 17, 1], [7, 20, 0], [8, 9, 1], [10, 13, 1], [12, 11, 0], [14, 8, 1], [15, 13, 0], [17, 5, 0], [19, 10, 1], [21, 9, 1], [23, 9, 1], [24.5, 10, 1], [27, 6, 0], [30, 7, 0], [32, 9, 1], [34, 6, 1], [37, 7, 0], [39, 6, 1], [41, 6, 0], [44, 6, 0], [46, 4, 2], [49, 3, 1], [52, 3, 1], [55, 2, 0], [59, 4, 0], [62, 4, 1], [67, 3, 0], [70, 4, 0], [73, 6, 1], [77, 3, 1], [81, 2, 0], [85, 3, 1], [90, 1, 1], [95, 2, 0], [99, 5, 0], [100.5, 10, 0], [102.5, 7, 1], [105, 6, 0], [107, 4, 2], [112, 3, 1], [135, 3, 0], [155, 5, 1], [163, 3, 1], [204, 3, 2], [253, 3, 1], [309, 4, 0], [313, 4, 0], [385, 3, 2], [398, 3, 1], [408, 4, 1]];
const vc = ['#ff4038', '#00c848', '#d8d8d8'];
for (let x = 112; x < 408; x += 2.5) m += rect(81 + x, 456, 1.5, 1, vc[Math.floor(rnd() * 2.5)]);
volume.forEach(([x, h, c]) => { m += rect(81 + x, 457 - h, 1.2, h, vc[c]); });
const avg = [...L(0, 0, [[198, 600], [201, 650], [205, 740], [210, 820], [217, 860], [235, 905], [255, 932], [300, 962], [350, 972], [400, 982], [447, 989]]), ...L(0, 330, [[500, 3], [700, 10], [950, 14], [1100, 11], [1200, 17]])];
const last = [[81, 190], [81, 280], ...L(70, 330, [[35, 0], [38, 60], [50, 72], [54, 50], [65, 82], [80, 85], [86, 30], [92, 70], [107, 92], [118, 85], [126, 62], [142, 90], [157, 106], [165, 95], [190, 90], [213, 72], [223, 118], [230, 92], [245, 95], [258, 106], [275, 103], [290, 96], [305, 100], [325, 92], [336, 42], [342, 50], [347, 38], [357, 38], [362, 78], [367, 62], [371, 98], [377, 72], [388, 60], [400, 68], [428, 68], [437, 28], [442, 58], [450, 45], [458, 52], [470, 38], [479, 15], [485, 40], [505, 80], [515, 66], [530, 92], [545, 72], [552, 80], [565, 65], [590, 68], [602, 78], [620, 70], [632, 88], [637, 78], [642, 90], [662, 98], [672, 93], [698, 90], [703, 25], [708, 60], [720, 58]], 3),
  ...L(0, 330, [[765, 55], [785, 85], [805, 75], [815, 40], [822, 58], [832, 75], [840, 66], [870, 72], [900, 83], [940, 84], [948, 65], [957, 0], [962, -132], [970, -30], [975, -110], [983, -25], [988, -52], [1000, -20], [1008, 0], [1020, 40], [1030, 25], [1058, 38], [1075, 78], [1092, 95], [1108, 38], [1118, 75], [1140, 90], [1165, 90], [1178, 102], [1200, 103]])];
m += path(avg, '#f8e070', 1.8) + path(last, '#fff', 1.8);
$('mplot').innerHTML = m;
const lab = [];
['16.93', '16.42', '15.90', '15.39', '14.88', '14.36', '13.85', '45854', '22927'].forEach((t, i) => {
  const y = [189, 218, 248, 278, 308, 338, 367, 398, 427][i], c = i < 3 ? 'lred' : i === 3 || i > 6 ? '' : 'green';
  lab.push([77, y, t, 'l ' + c], [494, y, ['10.01%', '6.67%', '3.34%', '0.00%', '-3.34%', '-6.67%', '-10.01%', '45854', '22927'][i], 'r ' + c]);
});
[[79, '08/05 9:30'], [182, '10:30'], [285, '13:00'], [387, '14:00'], [490, '15:00']].forEach(([x, t]) => lab.push([x, 468, t, 'c']));
fill('mlabels', lab, ([x, y, t, c]) => `<span class="${c}" style="left:${((x - 26) / 5.2).toFixed(2)}%;top:${((y - 180) / 2.98).toFixed(2)}%">${t}</span>`);
```
